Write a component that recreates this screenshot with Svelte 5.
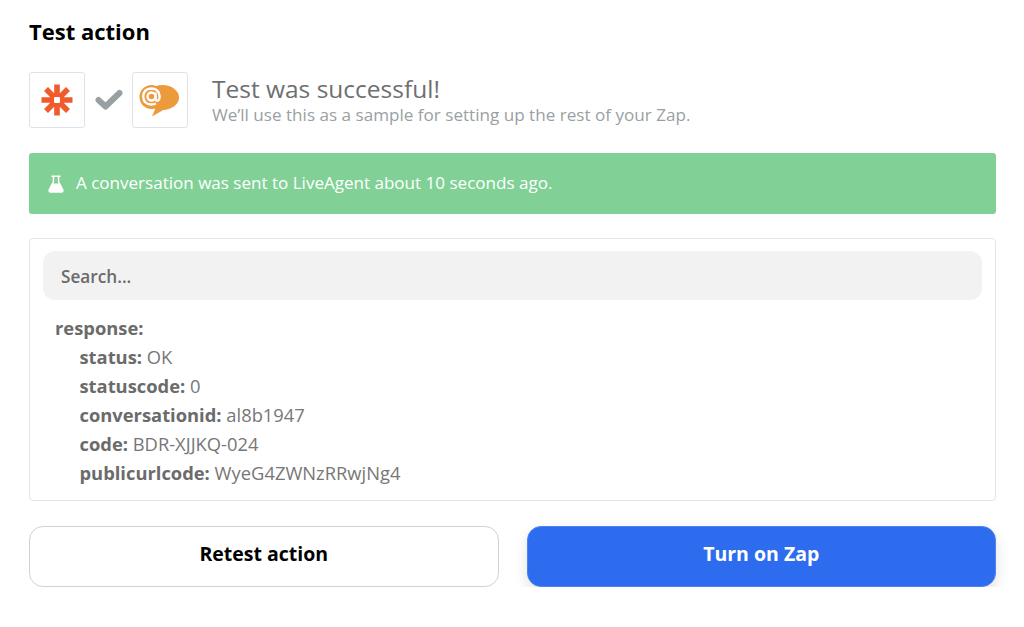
<script>
  const rows = [
    ['status', 'OK'],
    ['statuscode', '0'],
    ['conversationid', 'al8b1947'],
    ['code', 'BDR-XJJKQ-024'],
    ['publicurlcode', 'WyeG4ZWNzRRwjNg4']
  ];
</script>

<main class="page">
  <h1>Test action</h1>
  <section class="status">
    <div class="tile">
      <svg width="32" height="32" viewBox="0 0 32 32" aria-hidden="true">
        <g stroke="#f15a2b" stroke-width="5.6">
          <path d="M16 0.5V31.5M0.5 16H31.5M5 5L27 27M27 5L5 27" />
        </g>
        <rect x="13" y="13" width="6" height="6" rx="1" fill="#fff" />
      </svg>
    </div>
    <svg class="check" width="28" height="22" viewBox="0 0 28 22" aria-hidden="true">
      <path d="M3.5 11L10.5 17.5L24.5 4" fill="none" stroke="#98a0a4" stroke-width="6" stroke-linejoin="round" stroke-linecap="round" />
    </svg>
    <div class="tile">
      <svg width="42" height="34" viewBox="0 0 42 34" aria-hidden="true">
        <ellipse cx="23.5" cy="14.5" rx="16.5" ry="12.5" fill="#ec9a3c" />
        <path d="M17 24L13 33.5L26 26Z" fill="#ec9a3c" />
        <circle cx="12.5" cy="14" r="12" fill="#ec9a3c" />
        <circle cx="12.5" cy="13.5" r="4" fill="none" stroke="#fff" stroke-width="2.4" />
        <path d="M16.5 9.5V15.5Q16.5 18 19 17.5Q21 16.5 20.5 12.5Q19.5 5.5 12 5.5Q4.5 6 4.2 13.5Q4.5 21.5 12.5 21.5Q15 21.5 17 20.5" fill="none" stroke="#fff" stroke-width="2.4" />
      </svg>
    </div>
    <div class="status-text">
      <h2>Test was successful!</h2>
      <p>We’ll use this as a sample for setting up the rest of your Zap.</p>
    </div>
  </section>

  <div class="banner">
    <svg width="16" height="18" viewBox="0 0 16 18" aria-hidden="true">
      <path d="M3.5 0.5H12.5V2H11.3V6.5L15.5 14.8Q16.2 17.5 13.8 17.8H2.2Q-0.2 17.5 0.5 14.8L4.7 6.5V2H3.5ZM6.2 2V7L5.4 8.6H10.6L9.8 7V2Z" fill="#fff" fill-rule="evenodd" />
    </svg>
    <span>A conversation was sent to LiveAgent about 10 seconds ago.</span>
  </div>

  <section class="result">
    <div class="search">Search...</div>
    <div class="tree">
      <div class="line"><b>response:</b></div>
      {#each rows as [k, v]}
        <div class="line nested"><b>{k}:</b> {v}</div>
      {/each}
    </div>
  </section>

  <div class="actions">
    <button class="retest">Retest action</button>
    <button class="turn-on">Turn on Zap</button>
  </div>
</main>

<style>
  :global(body) {
    margin: 0;
    background: #fff;
  }
  .page {
    width: 967px;
    padding: 17px 0 0 29px;
    font-family: "Open Sans", sans-serif;
    color: #666;
  }
  h1 {
    margin: 0;
    height: 28px;
    font-size: 22px;
    line-height: 28px;
    font-weight: 700;
    color: #000;
  }
  .status {
    display: flex;
    align-items: center;
    margin-top: 27px;
    height: 56px;
  }
  .tile {
    width: 56px;
    height: 56px;
    box-sizing: border-box;
    border: 1px solid #dde3e8;
    border-radius: 3px;
    display: flex;
    align-items: center;
    justify-content: center;
  }
  .check {
    width: 28px;
    margin: 0 9.5px;
  }
  .status-text {
    margin-left: 24px;
  }
  h2 {
    margin: 0;
    font-size: 24.5px;
    line-height: 30px;
    font-weight: 400;
    color: #6f6f6f;
  }
  .status-text p {
    margin: 0;
    font-size: 17.1px;
    line-height: 22px;
    color: #9a9fa3;
  }
  .banner {
    display: flex;
    align-items: center;
    gap: 12px;
    height: 61px;
    margin-top: 25px;
    padding-left: 19px;
    background: #81d197;
    border-radius: 3px;
    color: #fff;
    font-size: 17.05px;
  }
  .banner span {
    margin-top: -2px;
  }
  .result {
    box-sizing: border-box;
    height: 263px;
    margin-top: 24px;
    padding: 12px 13px;
    border: 1px solid #e4e4e4;
    border-radius: 4px;
  }
  .search {
    height: 49px;
    padding-left: 18px;
    border-radius: 12px;
    background: #f2f2f2;
    font-size: 17.2px;
    font-weight: 600;
    line-height: 52px;
    color: #6a6a6a;
  }
  .tree {
    margin-top: 12.5px;
    padding-left: 12px;
    font-size: 18.35px;
    line-height: 29.1px;
    color: #777;
  }
  .nested {
    padding-left: 24.5px;
  }
  .tree b {
    font-weight: 700;
    color: #6b6b6b;
  }
  .actions {
    display: grid;
    grid-template-columns: 1fr 1fr;
    gap: 28px;
    margin-top: 25px;
  }
  button {
    height: 61px;
    border-radius: 14px;
    font-family: inherit;
    font-size: 19.5px;
    font-weight: 700;
    padding: 0 0 6px;
  }
  .retest {
    background: #fff;
    border: 1.5px solid #d2d2d2;
    color: #000;
  }
  .turn-on {
    background: #2d6cee;
    border: 1px solid #4f84f0;
    color: #fff;
    box-shadow: 0 6px 14px rgba(0, 0, 0, 0.12);
  }
</style>
